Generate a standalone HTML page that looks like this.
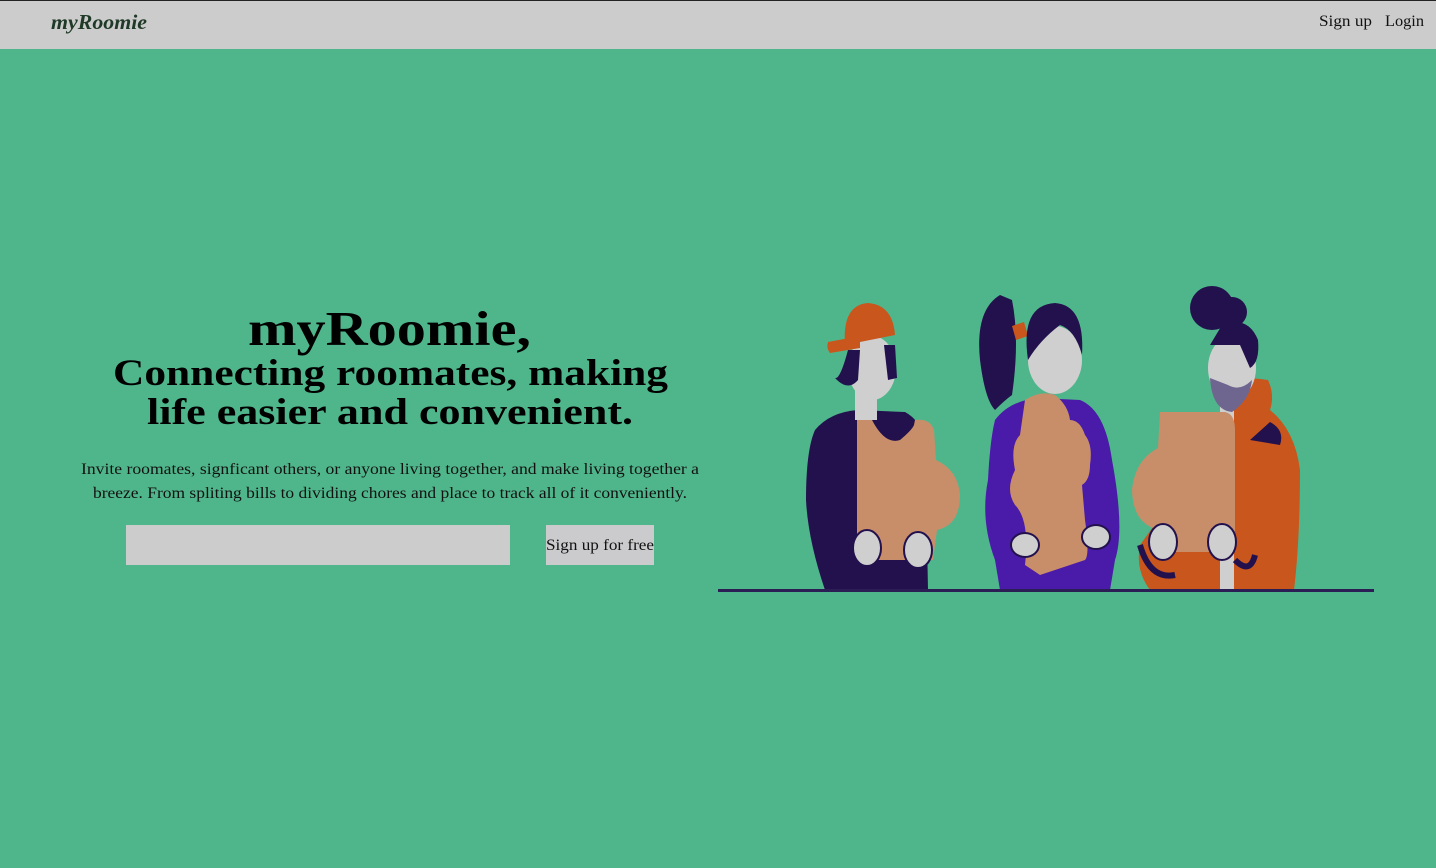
<!DOCTYPE html>
<html><head><meta charset="utf-8"><style>
html,body{margin:0;padding:0;width:1436px;height:868px;overflow:hidden;background:#4fb68b}
svg{display:block}
</style></head><body>
<svg width="1436" height="868" viewBox="0 0 1436 868" xmlns="http://www.w3.org/2000/svg" font-family="'Liberation Serif',serif">
<rect width="1436" height="868" fill="#4fb68b"/>
<rect width="1436" height="49" fill="#cccccc"/>
<rect width="1436" height="1" fill="#222"/>
<text x="51" y="29" font-size="21" font-weight="bold" font-style="italic" fill="#1f3a27" textLength="96" lengthAdjust="spacingAndGlyphs">myRoomie</text>
<text x="1319" y="26" font-size="16" fill="#111" textLength="53" lengthAdjust="spacingAndGlyphs">Sign up</text>
<text x="1385" y="26" font-size="16" fill="#111" textLength="39" lengthAdjust="spacingAndGlyphs">Login</text>

<text x="248" y="345" font-size="49" font-weight="bold" fill="#000" textLength="283" lengthAdjust="spacingAndGlyphs">myRoomie,</text>
<text x="113" y="385" font-size="37" font-weight="bold" fill="#000" textLength="555" lengthAdjust="spacingAndGlyphs">Connecting roomates, making</text>
<text x="147" y="424" font-size="37" font-weight="bold" fill="#000" textLength="486" lengthAdjust="spacingAndGlyphs">life easier and convenient.</text>
<text x="81" y="474" font-size="15.5" fill="#111" textLength="618" lengthAdjust="spacingAndGlyphs">Invite roomates, signficant others, or anyone living together, and make living together a</text>
<text x="93" y="498" font-size="15.5" fill="#111" textLength="594" lengthAdjust="spacingAndGlyphs">breeze. From spliting bills to dividing chores and place to track all of it conveniently.</text>
<rect x="126" y="525" width="384" height="40" fill="#cccccc"/>
<rect x="546" y="525" width="108" height="40" fill="#cbcbcd"/>
<text x="546" y="550" font-size="16" fill="#111" textLength="108" lengthAdjust="spacingAndGlyphs">Sign up for free</text>

<!-- Person 1 -->
<path d="M815 430 Q830 412 858 410 L905 412 Q920 420 925 440 L928 590 L825 590 Q808 540 806 500 Q806 450 815 430Z" fill="#22114d"/>
<rect x="855" y="385" width="22" height="35" fill="#cfcfd0"/>
<ellipse cx="872" cy="368" rx="24" ry="32" fill="#cfcfd0"/>
<path d="M848 350 Q840 380 835 378 Q848 392 858 380 L860 350Z" fill="#22114d"/>
<path d="M884 345 L895 345 L897 378 L888 380Z" fill="#22114d"/>
<path d="M845 345 Q842 305 868 303 Q893 305 895 335 L845 345Z" fill="#c9561c"/>
<path d="M828 342 L860 336 L860 348 L830 353 Q826 348 828 342Z" fill="#c9561c"/>
<path d="M857 420 L872 420 Q885 445 900 440 Q912 430 914 425 L915 420 Q930 418 934 430 L936 460 Q958 470 960 495 Q960 525 937 530 L933 560 L857 560Z" fill="#c88e6a"/>
<ellipse cx="867" cy="548" rx="14" ry="18" fill="#cfcfd0" stroke="#22114d" stroke-width="2"/>
<ellipse cx="918" cy="550" rx="14" ry="18" fill="#cfcfd0" stroke="#22114d" stroke-width="2"/>

<!-- Person 2 -->
<path d="M1000 295 Q975 310 980 360 Q985 400 995 410 Q1005 400 1012 395 Q1020 340 1012 300Z" fill="#22114d"/>
<path d="M1012 326 L1024 322 L1028 336 L1016 340Z" fill="#c9561c"/>
<path d="M995 420 Q1010 400 1040 398 L1080 400 Q1105 410 1112 460 Q1125 530 1115 560 L1110 590 L1000 590 L995 560 Q980 520 988 480 Q990 440 995 420Z" fill="#4a1aa8"/>
<ellipse cx="1055" cy="360" rx="27" ry="34" fill="#cfcfd0"/>
<path d="M1028 360 Q1020 305 1055 303 Q1085 305 1082 355 Q1075 330 1060 325 Q1040 340 1028 360Z" fill="#22114d"/>
<path d="M1025 400 Q1040 390 1055 395 Q1068 405 1070 420 Q1080 420 1085 435 Q1093 445 1090 465 Q1090 480 1082 485 L1085 520 Q1090 555 1085 560 L1040 575 L1025 565 Q1030 520 1015 505 Q1005 490 1015 470 Q1010 445 1020 435Z" fill="#c88e6a"/>
<ellipse cx="1025" cy="545" rx="14" ry="12" fill="#cfcfd0" stroke="#22114d" stroke-width="2"/>
<ellipse cx="1096" cy="537" rx="14" ry="12" fill="#cfcfd0" stroke="#22114d" stroke-width="2"/>

<!-- Person 3 -->
<path d="M1215 385 Q1240 375 1268 380 Q1275 395 1270 410 Q1295 430 1300 470 Q1300 540 1294 590 L1150 590 Q1135 570 1140 545 L1230 420Z" fill="#c9561c"/>
<rect x="1220" y="400" width="14" height="190" fill="#cfcfd0"/>
<ellipse cx="1232" cy="368" rx="24" ry="32" fill="#cfcfd0"/>
<path d="M1210 378 Q1212 410 1232 412 Q1250 400 1252 380 Q1240 392 1228 385Z" fill="#6f6690"/>
<circle cx="1212" cy="308" r="22" fill="#22114d"/>
<circle cx="1232" cy="312" r="15" fill="#22114d"/>
<path d="M1222 325 Q1248 315 1258 340 Q1260 362 1250 368 L1240 345 L1210 345Z" fill="#22114d"/>
<path d="M1250 440 L1270 422 Q1285 430 1280 445Z" fill="#22114d"/>
<path d="M1160 412 L1225 412 Q1235 414 1235 430 L1235 552 L1160 552 L1160 530 Q1133 525 1132 490 Q1135 460 1158 448Z" fill="#c88e6a"/>
<path d="M1140 545 Q1150 580 1175 575" stroke="#22114d" stroke-width="6" fill="none"/>
<ellipse cx="1163" cy="542" rx="14" ry="18" fill="#cfcfd0" stroke="#22114d" stroke-width="2"/>
<ellipse cx="1222" cy="542" rx="14" ry="18" fill="#cfcfd0" stroke="#22114d" stroke-width="2"/>
<path d="M1235 560 Q1250 575 1255 555" stroke="#22114d" stroke-width="6" fill="none"/>

<rect x="718" y="589" width="656" height="3" fill="#2a1e55"/>
</svg>
</body></html>
